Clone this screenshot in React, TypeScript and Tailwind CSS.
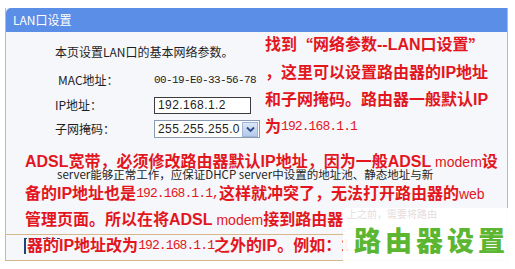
import React from "react";

const cjk = "font-['Noto_Sans_CJK_SC',sans-serif]";
const redFont = "font-['Liberation_Sans','Noto_Sans_CJK_SC',sans-serif] font-bold text-[16px] leading-[16px] text-[#e3161e] whitespace-nowrap";
const monoNum = "font-['Liberation_Mono',monospace] font-normal text-[13px] tracking-[-0.9px]";
const thinLatin = "font-['Liberation_Sans',sans-serif] font-normal text-[14px]";
const q = "font-['Noto_Sans_CJK_SC',sans-serif]";

function Chevron() {
  return (
    <svg width="9" height="7" viewBox="0 0 9 7">
      <path d="M1 1.5 L4.5 5 L8 1.5" fill="none" stroke="#2c4a86" strokeWidth="1.8" />
    </svg>
  );
}

export default function App() {
  return (
    <div className={`relative w-[515px] h-[269px] overflow-hidden bg-white ${cjk}`}>
      {/* panel */}
      <div className="ml-[5px] mt-[8px] w-[503px] h-[253px] flex flex-col border-x border-b border-[#d8b68c] bg-[#f5f7fb]">
        <div className="h-[24px] shrink-0 bg-[#5b8ee6] rounded-tl-[5px] flex items-center pl-[7px] text-[12px] text-white">
          LAN口设置
        </div>
        <div className="h-[202px] shrink-0 pl-[49px] pt-[12px] text-[12px] leading-[16px] text-[#1e1e1e]">
          <p>本页设置LAN口的基本网络参数。</p>
          <div className="mt-[12px] flex h-[16px] items-center">
            <span className="w-[99px] pl-[3px]">MAC地址：</span>
            <span className="font-['Liberation_Mono',monospace] text-[11px] tracking-[-0.6px]">00-19-E0-33-56-78</span>
          </div>
          <div className="mt-[8px] flex h-[18px] items-center">
            <span className="w-[99px]">IP地址：</span>
            <div className="w-[97px] h-[17px] border border-[#3c3c3c] bg-white flex items-center pl-[3px] font-['Liberation_Sans',sans-serif] text-[12px] tracking-[0.4px]">
              192.168.1.2
            </div>
          </div>
          <div className="mt-[6px] flex h-[18px] items-center">
            <span className="w-[99px]">子网掩码：</span>
            <div className="w-[106px] h-[18px] border border-[#8a9bb4] bg-white flex items-center justify-between pl-[3px] pr-px font-['Liberation_Sans',sans-serif] text-[12px] tracking-[0.4px]">
              <span>255.255.255.0</span>
              <span className="w-[16px] h-[15px] bg-gradient-to-b from-[#dce7f8] to-[#b4c9ea] border border-[#9fb5d8] flex items-center justify-center">
                <Chevron />
              </span>
            </div>
          </div>
          <p className="mt-[30px] pl-[2px] text-[11.5px] leading-[12px] whitespace-nowrap">server能够正常工作，应保证DHCP server中设置的地址池、静态地址与新</p>
        </div>
        <div className="h-[26px] shrink-0 border-t border-[#d8b68c] pl-[18px] pt-[3px]">
          <div className="w-[36px] h-[16px] border-l-2 border-t border-dashed border-[#23407e]" style={{ borderLeftStyle: "solid" }} />
        </div>
      </div>

      {/* upper red annotation */}
      <div className={`absolute left-[265px] top-[31px] flex flex-col ${redFont}`}>
        <div className="h-[28px] flex items-center">
          找到<span className={q}>“</span>网络参数--LAN口设置<span className={q}>”</span>
        </div>
        <div className="h-[27px] flex items-center">，这里可以设置路由器的IP地址</div>
        <div className="h-[27px] flex items-center">和子网掩码。路由器一般默认IP</div>
        <div className="h-[27px] flex items-center">
          为<span className={monoNum}>192.168.1.1</span>
        </div>
      </div>

      {/* lower red annotation */}
      <div className={`absolute left-[25px] top-[148px] flex flex-col ${redFont}`}>
        <div className="h-[30px] flex items-center pb-[2px]">
          ADSL宽带，必须修改路由器默认IP地址，因为一般ADSL<span className={thinLatin}>&nbsp;modem</span>设
        </div>
        <div className="h-[29px] flex items-center pt-[2px]">
          备的IP地址也是<span className={monoNum}>192.168.1.1,</span>这样就冲突了，无法打开路由器的<span className={thinLatin}>web</span>
        </div>
        <div className="h-[25px] flex items-center">
          管理页面。所以在将ADSL<span className={thinLatin}>&nbsp;modem</span>接到路由器
        </div>
        <div className="h-[28px] flex items-center ml-[2px]">
          器的IP地址改为<span className={monoNum}>192.168.1.1</span>之外的IP。例如：1
        </div>
      </div>

      {/* watermark */}
      <div className="absolute left-[343px] top-[208px] right-0 bottom-0 bg-white/95">
        <div className="ml-[4px] h-[11px] text-[10px] leading-[11px] text-[#e6dcdc] whitespace-nowrap">上之前，需要将路由</div>
        <div className="ml-[11px] mt-[6px] text-[27px] leading-[30px] font-black tracking-[4px] text-[#5cb632] whitespace-nowrap">
          路由器设置
        </div>
      </div>
    </div>
  );
}
